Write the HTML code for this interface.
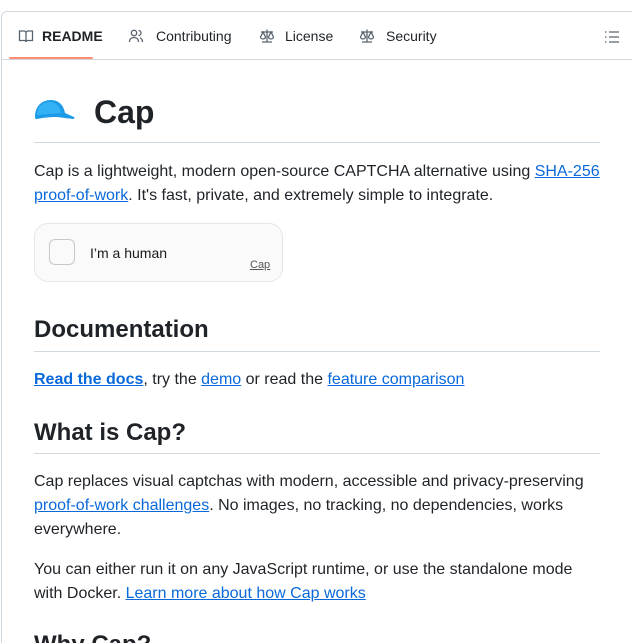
<!DOCTYPE html>
<html style="height:643px;overflow:hidden"><head><style>
body{margin:0;width:632px;height:643px;overflow:hidden;background:#fff;font-family:"Liberation Sans",sans-serif;color:#1f2328;position:relative}
.card{position:absolute;left:1px;top:11px;width:650px;height:700px;border:1px solid #d1d9e0;border-radius:6px}
.tabs{height:47px;border-bottom:1px solid #d1d9e0;position:relative}
.tab{position:absolute;top:16px;font-size:14px;display:flex;align-items:center;gap:10px}
.tab svg{width:16px;height:16px}
.ul{position:absolute;left:7px;top:45px;width:84px;height:2px;background:#fd8c73;border-radius:2px}
.c{position:absolute;left:34px;width:567px}
h1{margin:0;font-size:32px;font-weight:bold}
h2{margin:0;font-size:24px;font-weight:bold}
.hr{position:absolute;left:34px;width:566px;height:1px;background:#d1d9e0}
p{margin:0;font-size:16px;line-height:24px}
a{color:#0969da;text-decoration:underline}
</style></head><body>
<div class="card">
<div class="tabs">
<div class="tab" style="left:16px;font-weight:bold;gap:8px"><svg viewBox="0 0 16 16" fill="none" stroke="#59636e" stroke-width="1.3"><path d="M1.5 3h4.5c1 0 2 .8 2 2v9c0-.8-.8-1.5-1.8-1.5H1.5zM14.5 3H10c-1 0-2 .8-2 2v9c0-.8.8-1.5 1.8-1.5h4.7z"/></svg>README</div>
<div class="tab" style="left:126px;gap:12px"><svg viewBox="0 0 16 16" fill="none" stroke="#59636e" stroke-width="1.3"><circle cx="6" cy="5" r="2.7"/><path d="M1.5 14c0-3 2-4.5 4.5-4.5s4.5 1.5 4.5 4.5M10.5 2.5a2.5 2.5 0 010 5M12 9.8c1.5.6 2.5 2 2.5 4.2"/></svg>Contributing</div>
<div class="tab" style="left:257px;gap:10px"><svg viewBox="0 0 16 16" fill="none" stroke="#59636e" stroke-width="1.3"><path d="M8 1.5v12M3 14h10M2 4h12M4 4l-2.5 5a2.5 2 0 005 0zM12 4l-2.5 5a2.5 2 0 005 0z"/></svg>License</div>
<div class="tab" style="left:357px;gap:11px"><svg viewBox="0 0 16 16" fill="none" stroke="#59636e" stroke-width="1.3"><path d="M8 1.5v12M3 14h10M2 4h12M4 4l-2.5 5a2.5 2 0 005 0zM12 4l-2.5 5a2.5 2 0 005 0z"/></svg>Security</div>
<svg style="position:absolute;left:602px;top:17px" width="16" height="16" viewBox="0 0 16 16" stroke="#59636e" stroke-width="1.3"><path d="M5 3h10M5 8h10M5 13h10M1 3h1.5M1 8h1.5M1 13h1.5"/></svg>
<div class="ul"></div>
</div>
</div>
<svg style="position:absolute;left:33px;top:98px" width="42" height="24" viewBox="0 0 42 24"><path d="M2 19C2 8 9 2 18 2c8 0 13 6 14 13l9 4c1 1 0 2-1 2l-16-2c-8 0-15 1-20 2-2 0-2-1-2-2z" fill="#1e9be8"/><path d="M4 17C4 8 10 4 17 4c6 0 10 5 11 11z" fill="#33b3f5"/></svg>
<div class="c" style="top:94px;left:94px"><h1>Cap</h1></div>
<div class="hr" style="top:142px"></div>
<div class="c" style="top:160px"><p>Cap is a lightweight, modern open-source CAPTCHA alternative using <a>SHA-256 proof-of-work</a>. It's fast, private, and extremely simple to integrate.</p></div>
<div style="position:absolute;left:34px;top:223px;width:247px;height:57px;border:1px solid #e6e6e6;border-radius:14px;background:#fafafa">
<div style="position:absolute;left:14px;top:15px;width:24px;height:24px;border:1px solid #c8c8c8;border-radius:6px;background:#fafafa"></div>
<div style="position:absolute;left:55px;top:21px;font-size:14px;color:#1a1a1a">I’m a human</div>
<div style="position:absolute;left:215px;top:35px;font-size:11px;color:#555;text-decoration:underline">Cap</div>
</div>
<div class="c" style="top:316px"><h2>Documentation</h2></div>
<div class="hr" style="top:351px"></div>
<div class="c" style="top:368px"><p><a style="font-weight:bold">Read the docs</a>, try the <a>demo</a> or read the <a>feature comparison</a></p></div>
<div class="c" style="top:419px"><h2>What is Cap?</h2></div>
<div class="hr" style="top:453px"></div>
<div class="c" style="top:470px"><p>Cap replaces visual captchas with modern, accessible and privacy-preserving <a>proof-of-work challenges</a>. No images, no tracking, no dependencies, works everywhere.</p></div>
<div class="c" style="top:558px"><p>You can either run it on any JavaScript runtime, or use the standalone mode with Docker. <a>Learn more about how Cap works</a></p></div>
<div class="c" style="top:631px"><h2>Why Cap?</h2></div>
</body></html>
